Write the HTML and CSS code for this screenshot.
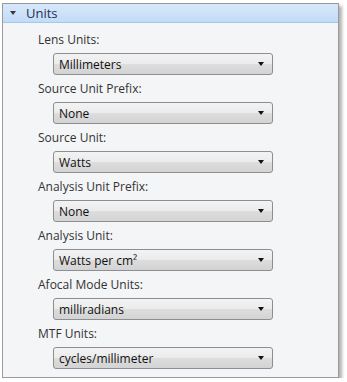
FILE: index.html
```html
<!DOCTYPE html>
<html lang="en">

<head>
  <meta charset="UTF-8" />
  <meta name="viewport" content="width=device-width, initial-scale=1.0" />
  <title>Units</title>
  <link rel="stylesheet" href="styles.css">
</head>

<body>
  <div class="panel">
    <div class="panel-header">
      <span class="expander"></span>
      <span class="panel-title">Units</span>
    </div>

    <div class="panel-body">
      <div class="field">
        <p class="field-label">Lens Units:</p>
        <div class="combo"><span>Millimeters</span><span class="combo-arrow"></span></div>
      </div>

      <div class="field">
        <p class="field-label">Source Unit Prefix:</p>
        <div class="combo"><span>None</span><span class="combo-arrow"></span></div>
      </div>

      <div class="field">
        <p class="field-label">Source Unit:</p>
        <div class="combo"><span>Watts</span><span class="combo-arrow"></span></div>
      </div>

      <div class="field">
        <p class="field-label">Analysis Unit Prefix:</p>
        <div class="combo"><span>None</span><span class="combo-arrow"></span></div>
      </div>

      <div class="field">
        <p class="field-label">Analysis Unit:</p>
        <div class="combo"><span>Watts per cm²</span><span class="combo-arrow"></span></div>
      </div>

      <div class="field">
        <p class="field-label">Afocal Mode Units:</p>
        <div class="combo"><span>milliradians</span><span class="combo-arrow"></span></div>
      </div>

      <div class="field">
        <p class="field-label">MTF Units:</p>
        <div class="combo"><span>cycles/millimeter</span><span class="combo-arrow"></span></div>
      </div>
    </div>
  </div>
</body>

</html>
```

FILE: styles.css
```css
body {
  margin: 0;
  padding: 3px 0 0 2px;
  background-color: white;
  font-family: "Open Sans", sans-serif;
  font-size: 12px;
  color: #333333;
}

.panel {
  width: 335px;
  border: 1px solid #9a9a9a;
  background-color: #f4f5f7;
  box-shadow: 3px 3px 3px rgba(0, 0, 0, 0.3);
}

.panel-header {
  height: 18px;
  display: flex;
  align-items: center;
  padding-left: 7px;
  background: linear-gradient(#d8e8fb, #c3dbf7);
  border-bottom: 1px solid #a8c6ea;
}

.expander {
  width: 0;
  height: 0;
  border-left: 3px solid transparent;
  border-right: 3px solid transparent;
  border-top: 4px solid #3a3a3a;
  margin-right: 10px;
}

.panel-title {
  font-size: 13px;
  color: #1e3150;
}

.panel-body {
  padding: 7px 0 8px 35px;
}

.field {
  margin-bottom: 4px;
}

.field:last-child {
  margin-bottom: 0;
}

.field-label {
  margin: 0 0 3px;
  line-height: 20px;
}

.combo {
  box-sizing: border-box;
  width: 220px;
  height: 22px;
  margin-left: 15px;
  padding: 0 8px 0 5px;
  display: flex;
  align-items: center;
  justify-content: space-between;
  border: 1px solid #8c8e91;
  border-radius: 3px;
  background: linear-gradient(#f3f3f3, #ebebeb 50%, #dddddd 51%, #d3d3d3);
  color: #111111;
}

.combo-arrow {
  width: 0;
  height: 0;
  border-left: 3.5px solid transparent;
  border-right: 3.5px solid transparent;
  border-top: 4px solid #111111;
}
```
